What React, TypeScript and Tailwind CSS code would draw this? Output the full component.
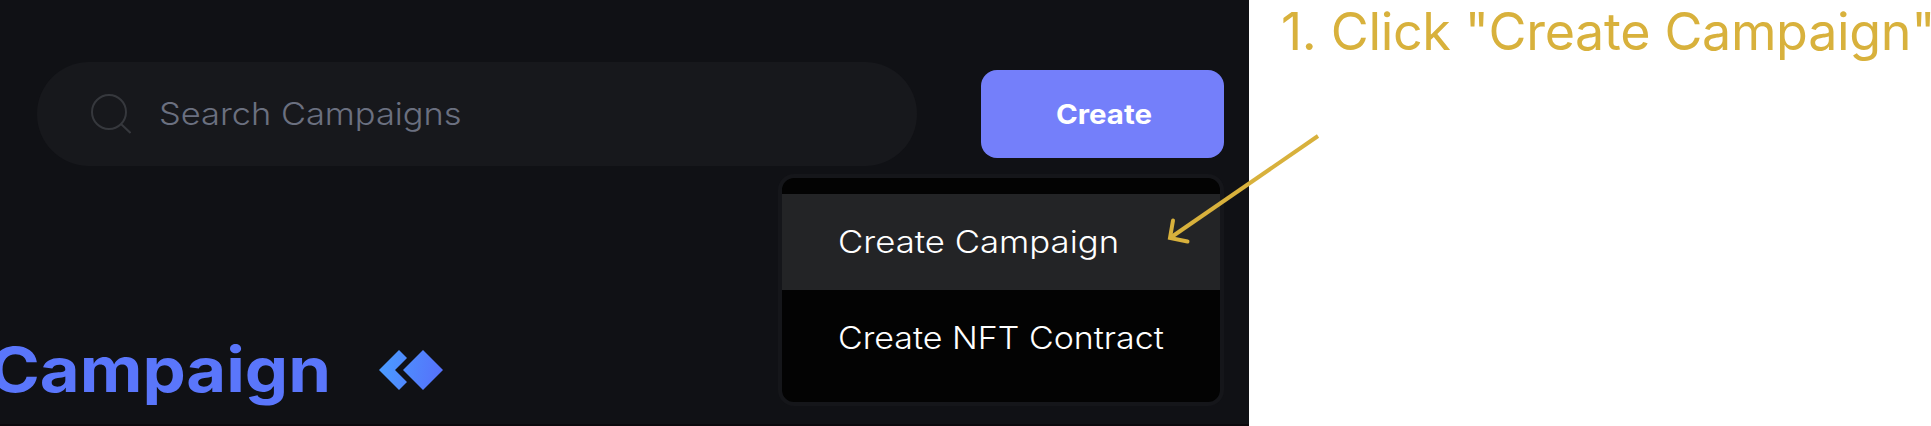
const wide = "inline-block origin-left whitespace-nowrap";

export default function App() {
  return (
    <div className="relative flex h-[426px] w-[1931px] overflow-hidden bg-white font-['Inter',sans-serif]">
      <main className="flex h-full w-[1249px] shrink-0 flex-col justify-between border-b-2 border-[#0b090d] bg-[#101115]">
        <header className="flex items-center justify-between pt-[62px] pr-[25px] pl-[37px]">
          <div className="flex h-[104px] w-[880px] items-center rounded-full bg-[#17181c] pl-[54px]">
            <svg className="h-10 w-10 shrink-0" viewBox="0 0 40 40" fill="none" stroke="#36383d" strokeWidth="2">
              <circle cx="18" cy="18" r="17" />
              <path d="M30 30l9.500 9" />
            </svg>
            <span className={`${wide} ml-[28px] scale-x-[1.11] text-[31px] leading-10 font-light text-[#6b7080]`}>
              Search Campaigns
            </span>
          </div>
          <button className="h-[88px] w-[243px] rounded-[16px] bg-[#747ffa] pt-0.5 pl-[75px] text-left text-white">
            <span className={`${wide} scale-x-[1.09] text-[27px] leading-10 font-bold`}>Create</span>
          </button>
        </header>
        <div className="mb-[14px] flex h-20 items-center">
          <h1 className={`${wide} -ml-[11px] w-[340px] scale-x-[1.108] text-[62px] leading-[80px] font-bold text-[#5a76fb]`}>
            Campaign
          </h1>
          <svg className="ml-[50px] h-10 w-16" viewBox="0 0 64 40">
            <defs>
              <linearGradient id="mark" gradientUnits="userSpaceOnUse" x1="0" y1="14" x2="64" y2="26">
                <stop offset="0" stopColor="#4a9cff" />
                <stop offset="1" stopColor="#5670fa" />
              </linearGradient>
            </defs>
            <path fill="url(#mark)" d="M20 0L28 8L16 20L28 32L20 40L0 20ZM44 0L64 20L44 40L24 20Z" />
          </svg>
        </div>
      </main>

      <aside className="pl-[32px]">
        <p className="text-[52px] leading-[64px] tracking-[-0.34px] whitespace-nowrap text-[#d8b13c]">
          1. Click "Create Campaign"
        </p>
      </aside>

      <ul className="absolute top-[174px] left-[778px] h-[232px] w-[446px] overflow-hidden rounded-[16px] border-4 border-[#15161a] bg-[#030303] pt-4 text-[31px] font-light text-white">
        <li className="flex h-24 items-center bg-[#232426] pl-[56px]">
          <span className={`${wide} scale-x-[1.12]`}>Create Campaign</span>
        </li>
        <li className="flex h-24 items-center pl-[56px]">
          <span className={`${wide} scale-x-[1.095]`}>Create NFT Contract</span>
        </li>
      </ul>

      <svg className="absolute top-[130px] left-[1160px] h-[120px] w-[170px]" viewBox="0 0 170 120" fill="none" stroke="#d8b13c" strokeWidth="4">
        <path d="M158 6L10 108" />
        <path d="M13 90.500L10 108L27.500 111.500" strokeLinecap="round" />
      </svg>
    </div>
  );
}
